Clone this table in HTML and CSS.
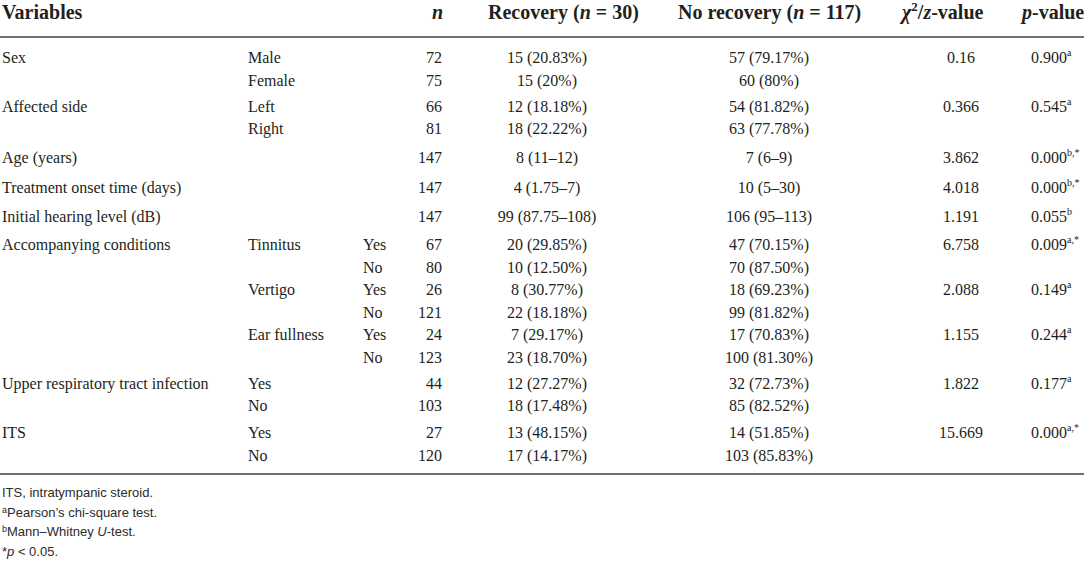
FILE: index.html
```html
<!DOCTYPE html>
<html>
<head>
<meta charset="utf-8">
<link rel="stylesheet" href="styles.css">
</head>
<body>
<table class="tbl">
  <colgroup>
    <col class="w1"><col class="w2"><col class="w3"><col class="w4"><col class="w5"><col class="w6"><col class="w7"><col class="w8">
  </colgroup>
  <thead>
    <tr>
      <th class="h-var" colspan="3">Variables</th>
      <th class="h-n"><i>n</i></th>
      <th class="h-rec">Recovery (<i>n</i> = 30)</th>
      <th class="h-norec">No recovery (<i>n</i> = 117)</th>
      <th class="h-chi"><i>χ</i><sup class="hsup">2</sup>/<i>z</i>-value</th>
      <th class="h-p"><i>p</i>-value</th>
    </tr>
  </thead>
  <tbody class="g-sex">
    <tr class="first"><td>Sex</td><td>Male</td><td></td><td class="n">72</td><td class="c">15 (20.83%)</td><td class="c">57 (79.17%)</td><td class="x">0.16</td><td class="p">0.900<sup>a</sup></td></tr>
    <tr><td></td><td>Female</td><td></td><td class="n">75</td><td class="c">15 (20%)</td><td class="c">60 (80%)</td><td></td><td></td></tr>
  </tbody>
  <tbody class="g-side">
    <tr class="first"><td>Affected side</td><td>Left</td><td></td><td class="n">66</td><td class="c">12 (18.18%)</td><td class="c">54 (81.82%)</td><td class="x">0.366</td><td class="p">0.545<sup>a</sup></td></tr>
    <tr><td></td><td>Right</td><td></td><td class="n">81</td><td class="c">18 (22.22%)</td><td class="c">63 (77.78%)</td><td></td><td></td></tr>
  </tbody>
  <tbody class="g-age">
    <tr class="first"><td>Age (years)</td><td></td><td></td><td class="n">147</td><td class="c">8 (11–12)</td><td class="c">7 (6–9)</td><td class="x">3.862</td><td class="p">0.000<sup>b,*</sup></td></tr>
  </tbody>
  <tbody class="g-onset">
    <tr class="first"><td>Treatment onset time (days)</td><td></td><td></td><td class="n">147</td><td class="c">4 (1.75–7)</td><td class="c">10 (5–30)</td><td class="x">4.018</td><td class="p">0.000<sup>b,*</sup></td></tr>
  </tbody>
  <tbody class="g-hear">
    <tr class="first"><td>Initial hearing level (dB)</td><td></td><td></td><td class="n">147</td><td class="c">99 (87.75–108)</td><td class="c">106 (95–113)</td><td class="x">1.191</td><td class="p">0.055<sup>b</sup></td></tr>
  </tbody>
  <tbody class="g-acc">
    <tr class="first"><td>Accompanying conditions</td><td>Tinnitus</td><td>Yes</td><td class="n">67</td><td class="c">20 (29.85%)</td><td class="c">47 (70.15%)</td><td class="x">6.758</td><td class="p">0.009<sup>a,*</sup></td></tr>
    <tr><td></td><td></td><td>No</td><td class="n">80</td><td class="c">10 (12.50%)</td><td class="c">70 (87.50%)</td><td></td><td></td></tr>
    <tr><td></td><td>Vertigo</td><td>Yes</td><td class="n">26</td><td class="c">8 (30.77%)</td><td class="c">18 (69.23%)</td><td class="x">2.088</td><td class="p">0.149<sup>a</sup></td></tr>
    <tr><td></td><td></td><td>No</td><td class="n">121</td><td class="c">22 (18.18%)</td><td class="c">99 (81.82%)</td><td></td><td></td></tr>
    <tr><td></td><td>Ear fullness</td><td>Yes</td><td class="n">24</td><td class="c">7 (29.17%)</td><td class="c">17 (70.83%)</td><td class="x">1.155</td><td class="p">0.244<sup>a</sup></td></tr>
    <tr><td></td><td></td><td>No</td><td class="n">123</td><td class="c">23 (18.70%)</td><td class="c">100 (81.30%)</td><td></td><td></td></tr>
  </tbody>
  <tbody class="g-uri">
    <tr class="first"><td>Upper respiratory tract infection</td><td>Yes</td><td></td><td class="n">44</td><td class="c">12 (27.27%)</td><td class="c">32 (72.73%)</td><td class="x">1.822</td><td class="p">0.177<sup>a</sup></td></tr>
    <tr><td></td><td>No</td><td></td><td class="n">103</td><td class="c">18 (17.48%)</td><td class="c">85 (82.52%)</td><td></td><td></td></tr>
  </tbody>
  <tbody class="g-its">
    <tr class="first"><td>ITS</td><td>Yes</td><td></td><td class="n">27</td><td class="c">13 (48.15%)</td><td class="c">14 (51.85%)</td><td class="x">15.669</td><td class="p">0.000<sup>a,*</sup></td></tr>
    <tr class="end"><td></td><td>No</td><td></td><td class="n">120</td><td class="c">17 (14.17%)</td><td class="c">103 (85.83%)</td><td></td><td></td></tr>
  </tbody>
</table>
<div class="notes">
  <p>ITS, intratympanic steroid.</p>
  <p><sup>a</sup>Pearson’s chi-square test.</p>
  <p><sup>b</sup>Mann–Whitney <i>U</i>-test.</p>
  <p>*<i>p</i> &lt; 0.05.</p>
</div>
</body>
</html>
```

FILE: styles.css
```css
html, body {
  margin: 0;
  padding: 0;
  background: #ffffff;
  overflow: hidden;
}
body {
  width: 1084px;
  height: 561px;
  color: #231f20;
  font-family: "Liberation Serif", "Times New Roman", serif;
}
.tbl {
  width: 1084px;
  table-layout: fixed;
  border-collapse: collapse;
  border-spacing: 0;
  font-size: 16px;
}
.w1 { width: 248px; }
.w2 { width: 115px; }
.w3 { width: 50px; }
.w4 { width: 37px; }
.w5 { width: 194px; }
.w6 { width: 250px; }
.w7 { width: 128px; }
.w8 { width: 62px; }

.tbl th {
  font-size: 20px;
  font-weight: bold;
  text-align: left;
  white-space: nowrap;
  padding: 0 0 12px 0;
  height: 22px;
  line-height: 24px;
  vertical-align: top;
  border-bottom: 2px solid #6f6f6f;
  overflow: visible;
}
.tbl th.h-var { padding-left: 2px; }
.tbl th.h-n { text-align: right; padding-right: 7px; }
.tbl th.h-rec { padding-left: 38px; }
.tbl th.h-norec { padding-left: 34px; }
.tbl th.h-chi { padding-left: 8px; }
.tbl th.h-p { padding-left: 0; }
.hsup {
  font-size: 13px;
  line-height: 0;
  vertical-align: 8px;
}

.tbl td {
  padding: 0;
  height: 22.5px;
  line-height: 22.5px;
  white-space: nowrap;
  vertical-align: middle;
}
.tbl td:first-child { padding-left: 2px; }
.tbl td.n { text-align: right; padding-right: 8px; }
.tbl td.c { text-align: center; }
.tbl td.x { text-align: center; padding-left: 6px; }
.tbl td.p { padding-left: 9px; }

.tbl tr.first td { padding-top: 4.5px; }
.tbl .g-sex tr.first td { padding-top: 9px; }
.tbl .g-side tr.first td { padding-top: 3.5px; }
.tbl .g-age tr.first td { padding-top: 6.5px; }
.tbl .g-onset tr.first td { padding-top: 7.5px; }
.tbl .g-hear tr.first td { padding-top: 6.5px; }
.tbl .g-acc tr.first td { padding-top: 5.5px; }
.tbl .g-uri tr.first td { padding-top: 3.5px; }
.tbl .g-its tr.first td { padding-top: 4.5px; }

.tbl tr.end td {
  padding-bottom: 6px;
  border-bottom: 2px solid #6f6f6f;
}
.tbl td sup {
  font-size: 10px;
  line-height: 0;
  vertical-align: 7px;
}

.notes {
  margin-top: 8px;
  padding-left: 2px;
  font-family: "Liberation Sans", Arial, sans-serif;
  font-size: 13px;
  color: #2b2b2b;
}
.notes p {
  margin: 0;
  line-height: 19.5px;
}
.notes sup {
  font-size: 9px;
  line-height: 0;
  vertical-align: 4px;
}
```
